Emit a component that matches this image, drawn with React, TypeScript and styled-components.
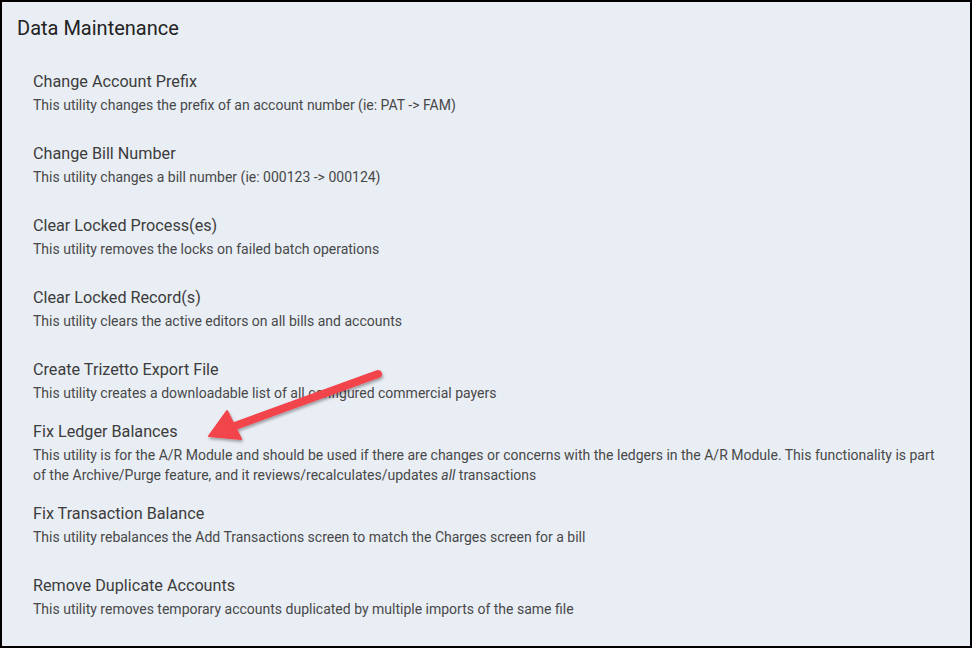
import React from "react";
import styled, { createGlobalStyle } from "styled-components";

const Global = createGlobalStyle`
  html, body { margin: 0; padding: 0; }
  body { font-family: Roboto, "Noto Sans", Arial, sans-serif; }
`;

const Frame = styled.div`
  position: relative;
  box-sizing: border-box;
  width: 972px;
  height: 648px;
  border: 2px solid #000;
  background: #e9eef5;
  padding: 14px 25px 0 15px;
  overflow: hidden;
`;

const Heading = styled.h1`
  margin: 0;
  font-size: 20px;
  font-weight: 400;
  line-height: 24px;
  color: #222;
`;

const List = styled.div`
  display: flex;
  flex-direction: column;
  margin-top: 31px;
  padding-left: 16px;
`;

const Item = styled.div<{ $tight?: boolean }>`
  box-sizing: border-box;
  min-height: ${(p) => (p.$tight ? "0" : "72px")};
  padding-bottom: 18px;
`;

const Title = styled.div`
  font-size: 16.2px;
  line-height: 22px;
  color: #3c3c3c;
  margin-bottom: 2px;
`;

const Desc = styled.div`
  font-size: 14px;
  line-height: 20px;
  color: #484848;
`;

const Em = styled.i`
  font-style: italic;
`;

const Arrow = styled.svg`
  position: absolute;
  left: 0;
  top: 0;
  pointer-events: none;
`;

const items: { t: string; d: React.ReactNode; tight?: boolean }[] = [
  { t: "Change Account Prefix", d: "This utility changes the prefix of an account number (ie: PAT -> FAM)" },
  { t: "Change Bill Number", d: "This utility changes a bill number (ie: 000123 -> 000124)" },
  { t: "Clear Locked Process(es)", d: "This utility removes the locks on failed batch operations" },
  { t: "Clear Locked Record(s)", d: "This utility clears the active editors on all bills and accounts" },
  { t: "Create Trizetto Export File", d: "This utility creates a downloadable list of all configured commercial payers", tight: true },
  {
    t: "Fix Ledger Balances",
    d: (
      <>
        This utility is for the A/R Module and should be used if there are changes or concerns with the ledgers in the A/R Module. This functionality is part of the Archive/Purge feature, and it reviews/recalculates/updates <Em>all</Em> transactions
      </>
    ),
  },
  { t: "Fix Transaction Balance", d: "This utility rebalances the Add Transactions screen to match the Charges screen for a bill" },
  { t: "Remove Duplicate Accounts", d: "This utility removes temporary accounts duplicated by multiple imports of the same file" },
];

export default function App() {
  return (
    <>
      <Global />
      <Frame>
        <Heading>Data Maintenance</Heading>
        <List>
          {items.map((it) => (
            <Item key={it.t} $tight={it.tight}>
              <Title>{it.t}</Title>
              <Desc>{it.d}</Desc>
            </Item>
          ))}
        </List>
        <Arrow width="972" height="648" viewBox="-2 -2 972 648">
          <defs>
            <filter id="sh" x="-20%" y="-20%" width="140%" height="140%">
              <feDropShadow dx="1" dy="2" stdDeviation="1.5" floodColor="#000" floodOpacity="0.35" />
            </filter>
          </defs>
          <g filter="url(#sh)" fill="#f2444c" stroke="#f2444c">
            <line x1="374" y1="370" x2="228" y2="423" strokeWidth="8" strokeLinecap="round" />
            <polygon points="205,432 223,407 237,435" strokeWidth="2" strokeLinejoin="round" />
          </g>
        </Arrow>
      </Frame>
    </>
  );
}
